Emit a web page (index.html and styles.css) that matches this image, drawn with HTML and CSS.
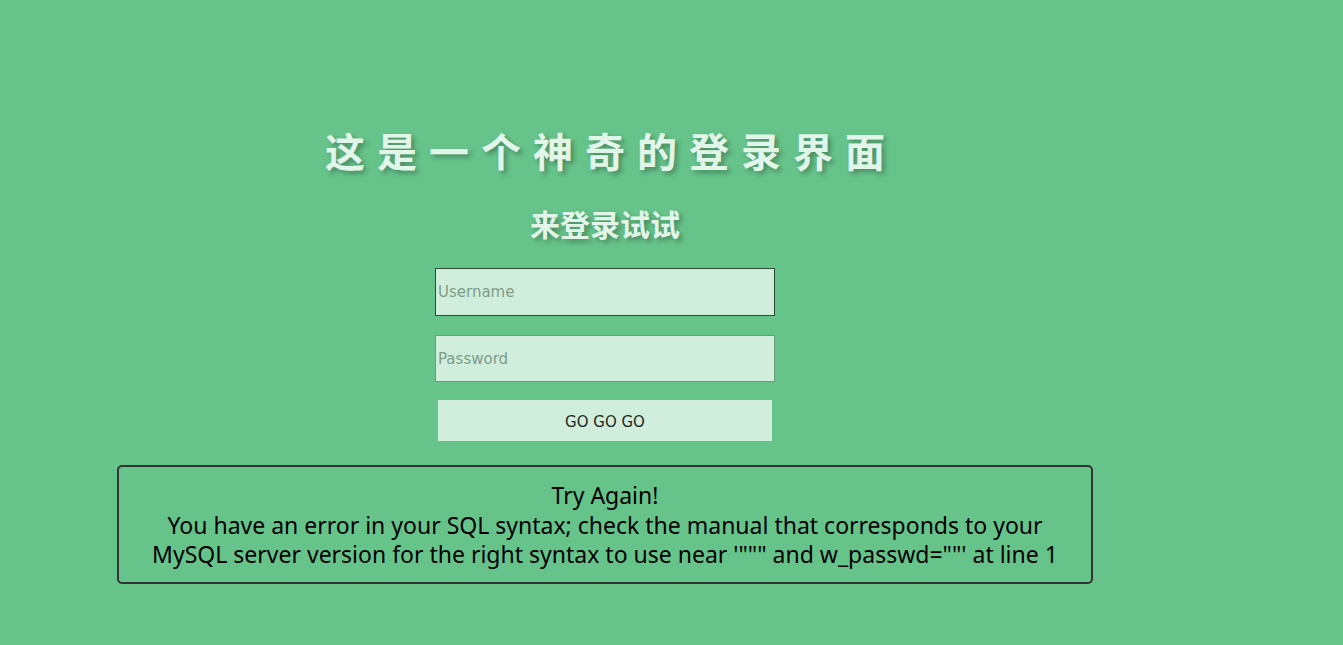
FILE: index.html
```html
<!DOCTYPE html>
<html lang="zh">
<head>
<meta charset="utf-8">
<title>登录</title>
<link rel="stylesheet" href="styles.css">
</head>
<body>
<div class="page">
  <h1 class="title">这是一个神奇的登录界面</h1>
  <h2 class="subtitle">来登录试试</h2>
  <form class="login">
    <input class="field field-focus" type="text" placeholder="Username">
    <input class="field field-last" type="password" placeholder="Password">
    <button class="btn" type="button">GO GO GO</button>
  </form>
  <div class="msg">Try Again!<br>You have an error in your SQL syntax; check the manual that corresponds to your MySQL server version for the right syntax to use near '""" and w_passwd=""' at line 1</div>
</div>
</body>
</html>
```
FILE: styles.css
```css
html, body {
  margin: 0;
  padding: 0;
  background: #66c48a;
  height: 100%;
}
.page {
  width: 1210px;
  display: flex;
  flex-direction: column;
  align-items: center;
  padding-top: 122px;
}
.title {
  margin: 0;
  font-family: "Noto Sans CJK SC", sans-serif;
  font-weight: 700;
  font-size: 40px;
  line-height: 56px;
  letter-spacing: 12px;
  padding-left: 12px;
  color: #e2f5e9;
  text-shadow: 3px 3px 5px rgba(0, 0, 0, 0.3);
}
.subtitle {
  margin: 25px 0 0;
  font-family: "Noto Sans CJK SC", sans-serif;
  font-weight: 700;
  font-size: 30px;
  line-height: 40px;
  color: #e2f5e9;
  text-shadow: 3px 3px 5px rgba(0, 0, 0, 0.3);
}
.login {
  display: flex;
  flex-direction: column;
  align-items: center;
  margin-top: 25px;
}
.field {
  box-sizing: border-box;
  width: 340px;
  height: 47px;
  margin: 0 0 19px;
  padding: 0 2px;
  border: 1px solid #6f9a7d;
  background: #d1eedc;
  font-family: "DejaVu Sans", sans-serif;
  font-size: 15px;
  color: #333;
  outline: none;
}
.field-focus {
  border-color: #2e4a38;
  height: 48px;
}
.field-last {
  margin-bottom: 18px;
}
.field::placeholder {
  color: #7d9d89;
}
.btn {
  width: 334px;
  height: 41px;
  margin: 0;
  border: none;
  background: #d1eedc;
  font-family: "DejaVu Sans", sans-serif;
  font-size: 15px;
  color: #1e2a24;
  padding-top: 3px;
}
.msg {
  box-sizing: border-box;
  width: 976px;
  margin-top: 24px;
  padding: 14px 30px 12px;
  border: 2px solid #333;
  border-radius: 5px;
  font-family: "Noto Sans", "Open Sans", sans-serif;
  font-size: 23px;
  line-height: 29.5px;
  text-align: center;
  color: #000;
}
```
